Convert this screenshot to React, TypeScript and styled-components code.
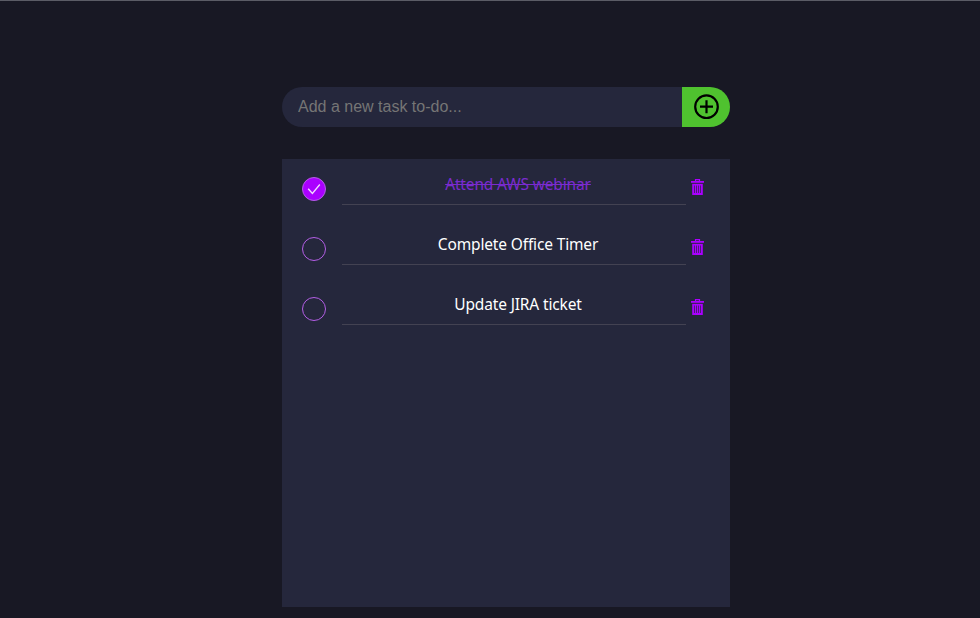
import React, { useState } from "react";
import styled, { createGlobalStyle } from "styled-components";

const GlobalStyle = createGlobalStyle`
  *, *::before, *::after { box-sizing: border-box; }
  body {
    margin: 0;
    background: #181824;
    font-family: "Segoe UI", "Noto Sans", sans-serif;
  }
`;

const Page = styled.main`
  display: flex;
  flex-direction: column;
  gap: 32px;
  height: 618px;
  padding: 86px 0 0 282px;
  border-top: 1px solid #5b5c66;
  overflow: hidden;
`;

const TaskForm = styled.form`
  display: flex;
  width: 448px;
  height: 40px;
`;

const TaskInput = styled.input`
  flex: 1;
  min-width: 0;
  padding: 0 16px;
  border: 0;
  border-radius: 20px 0 0 20px;
  outline: 0;
  background: #25273c;
  color: #fff;
  font: 16px Arial, "Liberation Sans", sans-serif;

  &::placeholder { color: #757575; opacity: 1; }
`;

const AddButton = styled.button`
  display: flex;
  align-items: center;
  justify-content: center;
  width: 48px;
  padding: 0 0 1px;
  border: 0;
  border-radius: 0 20px 20px 0;
  background: #4fc22f;
  color: #000;
  cursor: pointer;
`;

const TaskList = styled.ul`
  width: 448px;
  height: 448px;
  margin: 0;
  padding: 0;
  list-style: none;
  background: #25273c;
`;

const TaskRow = styled.li`
  display: flex;
  align-items: flex-start;
  height: 60px;
  padding: 0 26px 0 20px;
`;

const CheckButton = styled.button<{ $done: boolean }>`
  display: flex;
  align-items: center;
  justify-content: center;
  width: 24px;
  height: 24px;
  margin: 18px 16px 0 0;
  padding: 0;
  border: 1px solid #b45ee6;
  border-radius: 50%;
  background: ${({ $done }) => ($done ? "#aa00ff" : "transparent")};
  cursor: pointer;
`;

const TaskText = styled.span<{ $done: boolean }>`
  flex: 1;
  height: 46px;
  padding: 13px 0 0 8px;
  border-bottom: 1px solid #434252;
  color: ${({ $done }) => ($done ? "#7a2bd0" : "#fff")};
  font-size: 15.5px;
  line-height: 24px;
  letter-spacing: -0.15px;
  text-align: center;
  text-decoration: ${({ $done }) => ($done ? "line-through" : "none")};
`;

const DeleteButton = styled.button`
  display: flex;
  margin: 20px 0 0 5px;
  padding: 0;
  border: 0;
  background: none;
  color: #aa00ff;
  cursor: pointer;
`;

const PlusIcon = () => (
  <svg width="26" height="26" viewBox="0 0 26 26" fill="none" stroke="currentColor" strokeWidth="2.2">
    <circle cx="13.5" cy="12.7" r="11.3" />
    <path d="M13.5 6.2v13M7 12.7h13" />
  </svg>
);

const CheckIcon = () => (
  <svg width="22" height="22" viewBox="0 0 22 22" fill="none" stroke="#f1dcff" strokeWidth="1.3">
    <path d="M5.2 10.7l4.2 4.8 7.4-9" />
  </svg>
);

const TrashIcon = () => (
  <svg width="13" height="16" viewBox="0 0 13 16">
    <path d="M4.5 2.5V.6h4v1.9" fill="none" stroke="currentColor" strokeWidth="1.2" />
    <path d="M0 2h13v1.8H0z" fill="currentColor" />
    <path d="M1.2 4.8h10.6V16H1.2z" fill="currentColor" />
    <path d="M3.5 6.5v7.5M5.5 6.5v7.5M7.5 6.5v7.5M9.5 6.5v7.5" stroke="#25273c" strokeWidth="0.7" />
  </svg>
);

const initialTasks = [
  { id: 1, text: "Attend AWS webinar", done: true },
  { id: 2, text: "Complete Office Timer", done: false },
  { id: 3, text: "Update JIRA ticket", done: false },
];

export default function App() {
  const [tasks, setTasks] = useState(initialTasks);
  const [draft, setDraft] = useState("");

  const addTask = (event: React.FormEvent) => {
    event.preventDefault();
    if (!draft.trim()) return;
    setTasks([...tasks, { id: Date.now(), text: draft.trim(), done: false }]);
    setDraft("");
  };
  const toggle = (id: number) =>
    setTasks(tasks.map((task) => (task.id === id ? { ...task, done: !task.done } : task)));

  return (
    <>
      <GlobalStyle />
      <Page>
        <TaskForm onSubmit={addTask}>
          <TaskInput
            placeholder="Add a new task to-do..."
            value={draft}
            onChange={(event) => setDraft(event.target.value)}
          />
          <AddButton type="submit"><PlusIcon /></AddButton>
        </TaskForm>
        <TaskList>
          {tasks.map(({ id, text, done }) => (
            <TaskRow key={id}>
              <CheckButton $done={done} onClick={() => toggle(id)}>{done && <CheckIcon />}</CheckButton>
              <TaskText $done={done}>{text}</TaskText>
              <DeleteButton onClick={() => setTasks(tasks.filter((task) => task.id !== id))}>
                <TrashIcon />
              </DeleteButton>
            </TaskRow>
          ))}
        </TaskList>
      </Page>
    </>
  );
}
